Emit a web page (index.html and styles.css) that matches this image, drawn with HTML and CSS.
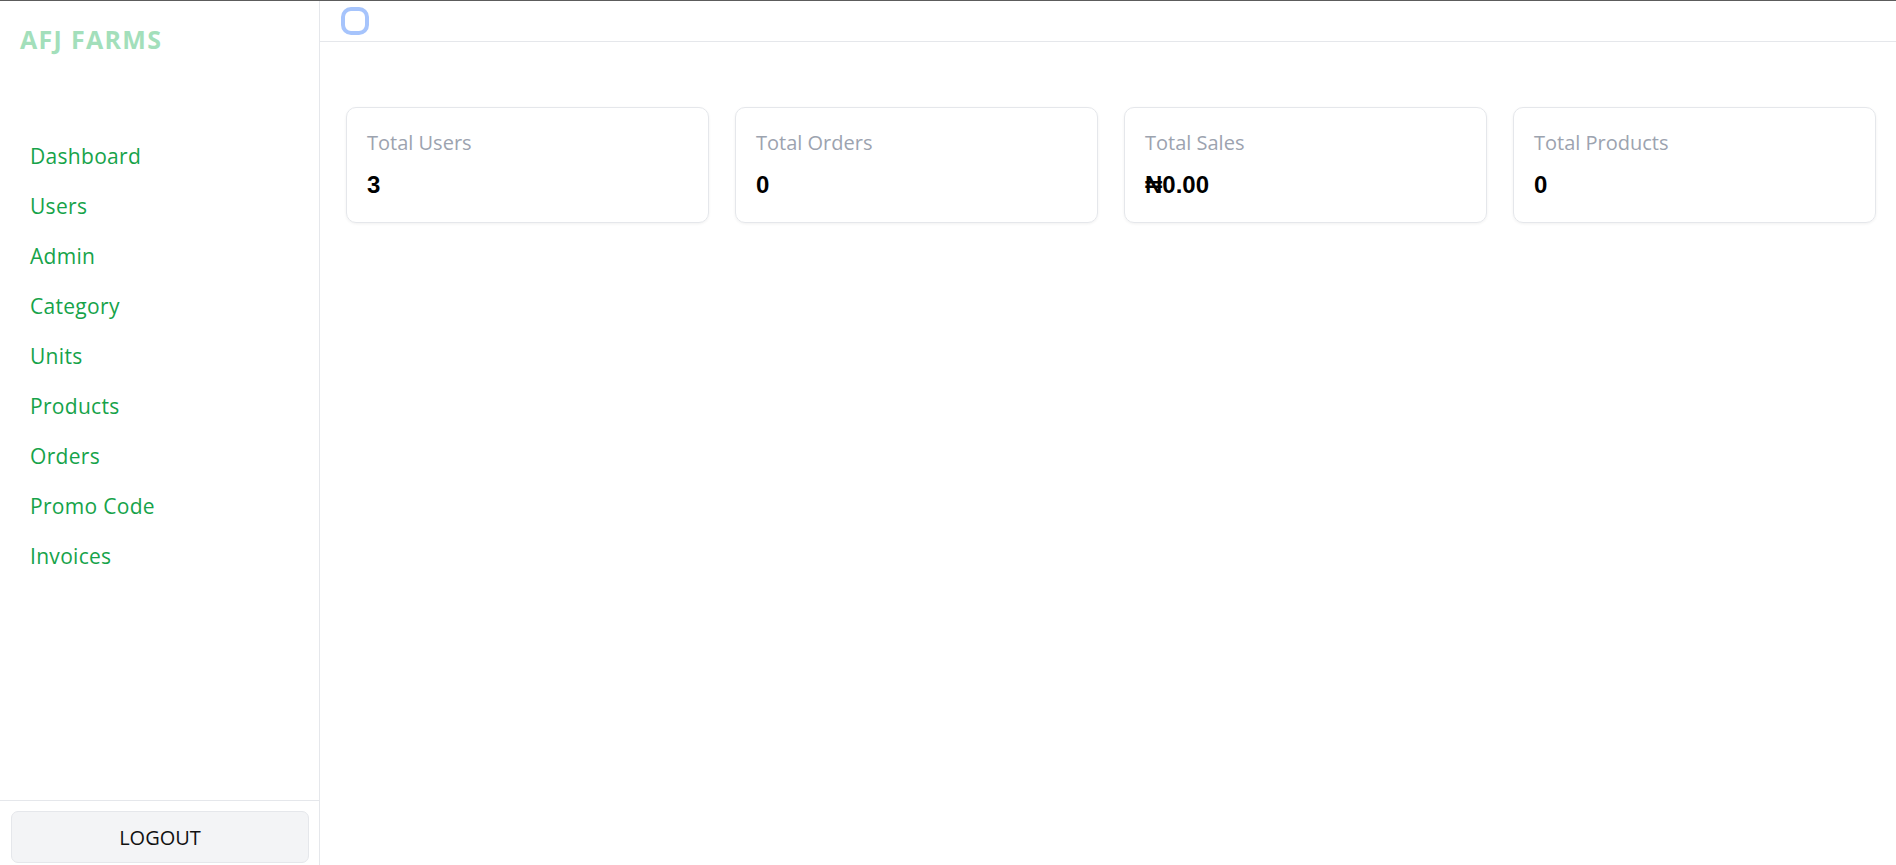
FILE: index.html
```html
<!DOCTYPE html>
<html lang="en">
<head>
<meta charset="utf-8">
<title>AFJ Farms Admin</title>
<link rel="stylesheet" href="styles.css">
</head>
<body>
<div class="app">
  <aside class="sidebar">
    <div class="logo">AFJ FARMS</div>
    <nav class="nav">
      <a class="nav-link" href="#">Dashboard</a>
      <a class="nav-link" href="#">Users</a>
      <a class="nav-link" href="#">Admin</a>
      <a class="nav-link" href="#">Category</a>
      <a class="nav-link" href="#">Units</a>
      <a class="nav-link" href="#">Products</a>
      <a class="nav-link" href="#">Orders</a>
      <a class="nav-link" href="#">Promo Code</a>
      <a class="nav-link" href="#">Invoices</a>
    </nav>
    <div class="sidebar-footer">
      <button class="logout">LOGOUT</button>
    </div>
  </aside>
  <main class="main">
    <header class="topbar">
      <span class="toggle"></span>
    </header>
    <section class="stats">
      <div class="card">
        <div class="card-label">Total Users</div>
        <div class="card-value">3</div>
      </div>
      <div class="card">
        <div class="card-label">Total Orders</div>
        <div class="card-value">0</div>
      </div>
      <div class="card">
        <div class="card-label">Total Sales</div>
        <div class="card-value">&#8358;0.00</div>
      </div>
      <div class="card">
        <div class="card-label">Total Products</div>
        <div class="card-value">0</div>
      </div>
    </section>
  </main>
</div>
</body>
</html>
```
FILE: styles.css
```css
* { box-sizing: border-box; }
html, body { margin: 0; padding: 0; }
body {
  background: #ffffff;
  font-family: "Open Sans", "DejaVu Sans", sans-serif;
  border-top: 1px solid #5c5c5c;
  height: 865px;
  overflow: hidden;
}
.app {
  display: flex;
  height: 864px;
}
.sidebar {
  width: 320px;
  flex: 0 0 320px;
  border-right: 1px solid #e5e7eb;
  display: flex;
  flex-direction: column;
  height: 100%;
}
.logo {
  padding: 21px 0 0 20px;
  font-size: 25px;
  font-weight: 700;
  line-height: 34px;
  color: #a3dfbb;
  letter-spacing: 1.3px;
}
.nav {
  margin-top: 75px;
  display: flex;
  flex-direction: column;
}
.nav-link {
  display: block;
  padding-left: 30px;
  height: 50px;
  line-height: 50px;
  font-size: 21px;
  letter-spacing: 0.3px;
  color: #16a34a;
  text-decoration: none;
}
.sidebar-footer {
  margin-top: auto;
  border-top: 1px solid #e5e7eb;
  padding: 10px 10px 2px 11px;
}
.logout {
  width: 100%;
  height: 52px;
  background: #f3f4f6;
  border: 1px solid #e5e7eb;
  border-radius: 7px;
  font-family: "Open Sans", "DejaVu Sans", sans-serif;
  font-size: 20px;
  color: #111111;
  padding: 0;
}
.main {
  flex: 1;
  display: flex;
  flex-direction: column;
}
.topbar {
  height: 41px;
  border-bottom: 1px solid #e5e7eb;
  padding: 6px 0 0 21px;
}
.toggle {
  display: block;
  width: 28px;
  height: 28px;
  border: 4px solid #a6c4fc;
  border-radius: 10px;
}
.stats {
  display: grid;
  grid-template-columns: repeat(4, 1fr);
  gap: 26px;
  padding: 65px 20px 0 26px;
}
.card {
  border: 1px solid #e5e7eb;
  border-radius: 10px;
  box-shadow: 0 1px 3px rgba(0, 0, 0, 0.06);
  padding: 21px 20px 22px 20px;
}
.card-label {
  font-size: 20px;
  line-height: 28px;
  color: #9ca3af;
}
.card-value {
  margin-top: 13px;
  font-family: "Liberation Sans", "DejaVu Sans", sans-serif;
  font-size: 24px;
  font-weight: 700;
  line-height: 30px;
  color: #000000;
}
```
